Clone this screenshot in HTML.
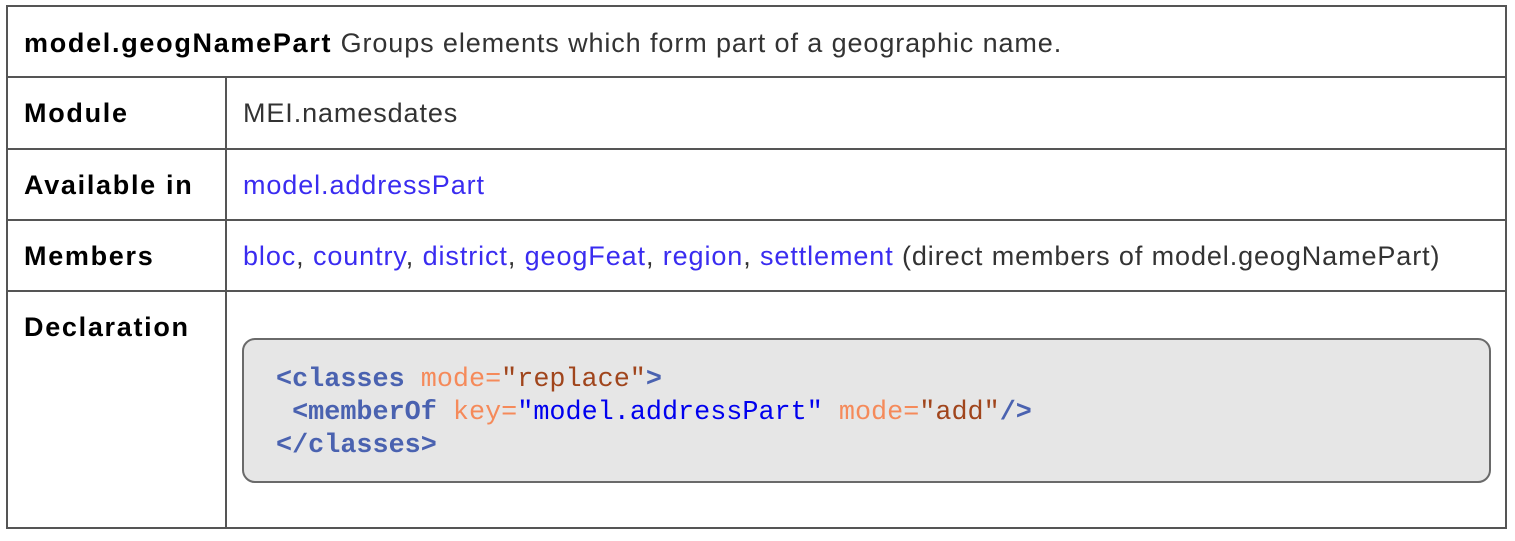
<!DOCTYPE html>
<html><head><meta charset="utf-8"><style>
body{margin:0;background:#fff;width:1515px;height:541px;position:relative;font-family:"Liberation Sans",sans-serif;color:#333;}
.b{position:absolute;background:#555;}
.t{position:absolute;font-size:27px;white-space:nowrap;line-height:30px;letter-spacing:0.9px;}
.k{font-weight:bold;color:#000;letter-spacing:1.7px;}
a{color:#3a2cf0;text-decoration:none;}
.code{position:absolute;left:242px;top:338px;width:1245px;height:141px;background:#e6e6e6;border:2px solid #6a6a6a;border-radius:13px;box-sizing:content-box;}
pre{position:absolute;left:276px;top:364px;margin:0;font-family:"Liberation Mono",monospace;font-size:26.8px;line-height:33px;}
.tg{color:#4a62b0;font-weight:bold;}
.at{color:#f58a5a;}
.v{color:#a0451c;}
.vb{color:#0000ee;}
</style></head><body>
<div class="b" style="left:6px;top:5px;width:1501px;height:2px"></div>
<div class="b" style="left:6px;top:527px;width:1501px;height:2px"></div>
<div class="b" style="left:6px;top:5px;width:2px;height:524px"></div>
<div class="b" style="left:1505px;top:5px;width:2px;height:524px"></div>
<div class="b" style="left:6px;top:76px;width:1501px;height:2px"></div>
<div class="b" style="left:6px;top:148px;width:1501px;height:2px"></div>
<div class="b" style="left:6px;top:219px;width:1501px;height:2px"></div>
<div class="b" style="left:6px;top:290px;width:1501px;height:2px"></div>
<div class="b" style="left:225px;top:76px;width:2px;height:453px"></div>

<div class="t" style="left:24px;top:28px"><span class="k">model.geogNamePart</span> Groups elements which form part of a geographic name.</div>
<div class="t k" style="left:24px;top:98px">Module</div>
<div class="t" style="left:243px;top:98px">MEI.namesdates</div>
<div class="t k" style="left:24px;top:170px">Available in</div>
<div class="t" style="left:243px;top:170px"><a>model.addressPart</a></div>
<div class="t k" style="left:24px;top:241px">Members</div>
<div class="t" style="left:243px;top:241px"><a>bloc</a>, <a>country</a>, <a>district</a>, <a>geogFeat</a>, <a>region</a>, <a>settlement</a> (direct members of model.geogNamePart)</div>
<div class="t k" style="left:24px;top:312px">Declaration</div>
<div class="code"></div>
<pre><span class="tg">&lt;classes</span> <span class="at">mode=</span><span class="v">"replace"</span><span class="tg">&gt;</span>
 <span class="tg">&lt;memberOf</span> <span class="at">key=</span><span class="vb">"model.addressPart"</span> <span class="at">mode=</span><span class="v">"add"</span><span class="tg">/&gt;</span>
<span class="tg">&lt;/classes&gt;</span></pre>
</body></html>
